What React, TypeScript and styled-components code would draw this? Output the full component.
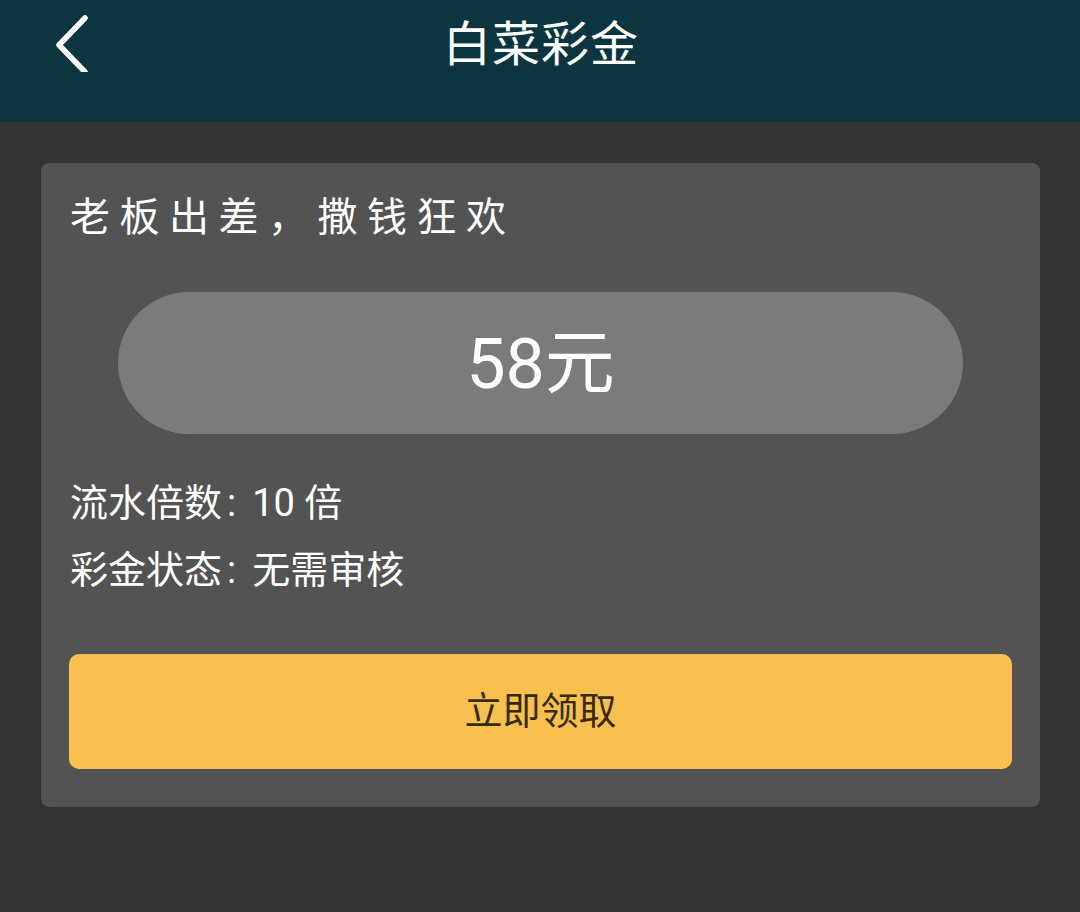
import styled, { createGlobalStyle } from "styled-components";

const GlobalStyle = createGlobalStyle`
  * {
    box-sizing: border-box;
  }

  body {
    margin: 0;
    background-color: #333333;
    font-family: Roboto, "Noto Sans CJK SC", sans-serif;
    color: #ffffff;
  }
`;

const infoRows = [
  { label: "流水倍数", value: "10 倍" },
  { label: "彩金状态", value: "无需审核" },
];

export default function App() {
  return (
    <>
      <GlobalStyle />
      <Page>
        <Header>
          <HeaderRow>
            <BackButton aria-label="返回">
              <svg width="40" height="60" viewBox="0 0 40 60" fill="none">
                <path
                  d="M33 6 L7 33 L33 60"
                  stroke="#ffffff"
                  strokeWidth="5.5"
                  strokeLinecap="round"
                  strokeLinejoin="round"
                />
              </svg>
            </BackButton>
            <HeaderTitle>白菜彩金</HeaderTitle>
          </HeaderRow>
        </Header>

        <Card>
          <CardTitle>老板出差，撒钱狂欢</CardTitle>
          <AmountPill>58元</AmountPill>
          <InfoList>
            {infoRows.map((row) => (
              <InfoLine key={row.label}>
                {row.label}
                <Colon>:</Colon>
                {row.value}
              </InfoLine>
            ))}
          </InfoList>
          <ClaimButton>立即领取</ClaimButton>
        </Card>
      </Page>
    </>
  );
}

const Page = styled.div`
  min-height: 912px;
  background-color: #333333;
  padding-bottom: 40px;
`;

const Header = styled.header`
  height: 122px;
  background-color: #0d3540;
`;

const HeaderRow = styled.div`
  position: relative;
  display: flex;
  align-items: center;
  justify-content: center;
  height: 90px;
`;

const BackButton = styled.button`
  position: absolute;
  left: 52px;
  top: 12px;
  display: flex;
  padding: 0;
  background: none;
  border: none;
  cursor: pointer;
`;

const HeaderTitle = styled.h1`
  margin: 0 0 0 2px;
  font-size: 48px;
  font-weight: 400;
  line-height: 1;
  letter-spacing: 1px;
`;

const Card = styled.section`
  display: flex;
  flex-direction: column;
  margin: 41px 40px 0 41px;
  padding: 29px 28px 38px 28px;
  background-color: #535353;
  border-radius: 8px;
`;

const CardTitle = styled.h2`
  margin: 0 0 0 1px;
  font-size: 40px;
  font-weight: 400;
  line-height: 52px;
  letter-spacing: 9.5px;
`;

const AmountPill = styled.div`
  display: flex;
  align-items: center;
  justify-content: center;
  height: 142px;
  margin: 48px 49px 0 49px;
  padding-top: 2px;
  background-color: #7b7b7b;
  border-radius: 71px;
  font-size: 70px;
  line-height: 1;
`;

const InfoList = styled.div`
  display: flex;
  flex-direction: column;
  margin-top: 36px;
  padding-left: 1px;
`;

const InfoLine = styled.p`
  display: flex;
  margin: 0;
  font-size: 38px;
  line-height: 67px;
`;

const Colon = styled.span`
  margin: 0 16px 0 5px;
`;

const ClaimButton = styled.button`
  height: 115px;
  margin-top: 50px;
  padding-bottom: 9px;
  background-color: #f7c04f;
  border: none;
  border-radius: 10px;
  color: #3a2a0c;
  font-family: Roboto, "Noto Sans CJK SC", sans-serif;
  font-size: 38px;
  cursor: pointer;
`;
